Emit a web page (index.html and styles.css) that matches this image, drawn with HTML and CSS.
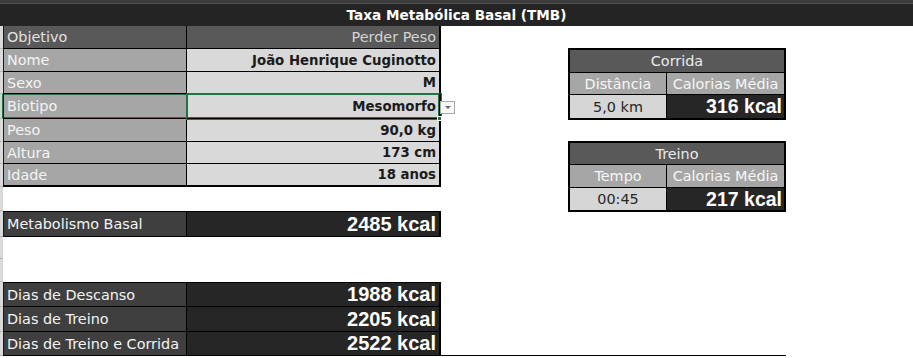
FILE: index.html
```html
<!DOCTYPE html>
<html lang="pt-BR">
<head>
<meta charset="utf-8">
<title>Taxa Metabólica Basal (TMB)</title>
<link rel="stylesheet" href="styles.css">
</head>
<body>
<div class="topstrip"></div>
<header class="titlebar">Taxa Metabólica Basal (TMB)</header>
<main class="sheet">
  <section class="profile">
    <div class="row h23 tone-dark"><span class="gut"></span><span class="lbl">Objetivo</span><span class="val light">Perder Peso</span></div>
    <div class="row h23 tone-grey"><span class="gut"></span><span class="lbl">Nome</span><span class="val">João Henrique Cuginotto</span></div>
    <div class="row h22 tone-grey"><span class="gut"></span><span class="lbl">Sexo</span><span class="val">M</span></div>
    <div class="row h25 tone-grey selected"><span class="gut"></span><span class="lbl">Biotipo</span><span class="val active">Mesomorfo<span class="dd"></span><span class="handle"></span></span></div>
    <div class="row h23 tone-grey"><span class="gut"></span><span class="lbl">Peso</span><span class="val">90,0 kg</span></div>
    <div class="row h22 tone-grey"><span class="gut"></span><span class="lbl">Altura</span><span class="val">173 cm</span></div>
    <div class="row h23 tone-grey last"><span class="gut"></span><span class="lbl">Idade</span><span class="val">18 anos</span></div>
    <div class="row h24"><span class="gut"></span></div>
    <div class="row h26 tone-black first"><span class="gut"></span><span class="lbl">Metabolismo Basal</span><span class="val big">2485 kcal</span></div>
    <div class="row h22"><span class="gut"></span></div>
    <div class="row h23"><span class="gut"></span></div>
    <div class="row h25 tone-black first"><span class="gut"></span><span class="lbl">Dias de Descanso</span><span class="val big">1988 kcal</span></div>
    <div class="row h25 tone-black"><span class="gut"></span><span class="lbl">Dias de Treino</span><span class="val big">2205 kcal</span></div>
    <div class="row h24 tone-black"><span class="gut"></span><span class="lbl">Dias de Treino e Corrida</span><span class="val big">2522 kcal</span></div>
  </section>

  <aside class="side">
    <div class="card corrida">
      <div class="c-head">Corrida</div>
      <div class="c-sub">Distância</div>
      <div class="c-sub">Calorias Média</div>
      <div class="c-in">5,0 km</div>
      <div class="c-out">316 kcal</div>
    </div>
    <div class="card treino">
      <div class="c-head">Treino</div>
      <div class="c-sub">Tempo</div>
      <div class="c-sub">Calorias Média</div>
      <div class="c-in">00:45</div>
      <div class="c-out">217 kcal</div>
    </div>
    <div class="rule"></div>
  </aside>
</main>
</body>
</html>
```

FILE: styles.css
```css
* { box-sizing: border-box; }

html, body {
  margin: 0;
  background: #ffffff;
  font-family: "DejaVu Sans", "Noto Sans", sans-serif;
  overflow: hidden;
}

.topstrip {
  height: 4px;
  background: #3c3c3c;
  border-bottom: 1px solid #505050;
}

.titlebar {
  height: 22px;
  background: #242424;
  color: #ffffff;
  font-weight: bold;
  font-size: 13.6px;
  line-height: 22px;
  text-align: center;
}

.sheet {
  display: flex;
  align-items: stretch;
}

/* left block: label / value rows */
.profile {
  width: 441px;
  display: flex;
  flex-direction: column;
}

.row { display: flex; }
.h22 { height: 22px; }
.h23 { height: 23px; }
.h24 { height: 24px; }
.h25 { height: 25px; }
.h26 { height: 26px; }

.gut {
  width: 3px;
  flex: none;
  background: #dadada;
  border-bottom: 1px solid #b4b4b4;
}

.lbl, .val {
  display: flex;
  align-items: center;
  border-bottom: 1px solid #000;
  white-space: nowrap;
}

.lbl {
  width: 184px;
  padding-left: 3px;
  border-left: 1px solid #1a1a1a;
  border-right: 1px solid #000;
  font-size: 14.4px;
  color: #f4f4f4;
}

.val {
  width: 254px;
  justify-content: flex-end;
  padding-right: 3px;
  border-right: 2px solid #000;
  font-size: 13.3px;
  font-weight: bold;
  color: #1b1b1b;
}

.tone-dark .lbl, .tone-dark .val { background: #595959; }
.tone-dark .lbl { color: #e2e2e2; }
.val.light { font-weight: normal; font-size: 14.4px; color: #d4d4d4; }

.tone-grey .lbl { background: #a6a6a6; }
.tone-grey .val { background: #d9d9d9; }

.tone-black .lbl { background: #3f3f3f; }
.tone-black .val { background: #262626; }
.first .lbl, .first .val { border-top: 1px solid #000; }

.last .lbl, .last .val { border-bottom-width: 2px; }

.val.big {
  font-family: "Liberation Sans", Arial, sans-serif;
  font-size: 20px;
  color: #ffffff;
  padding-right: 3px;
}

/* active cell with validation list button */
.selected .gut { background: #cfd9d2; border-right: 1px solid #217346; }
.selected .lbl { box-shadow: inset 0 1px 0 #2f6b4a, inset 0 -1px 0 #2f6b4a; }
.val.active {
  position: relative;
  box-shadow: 0 0 0 1px #217346, inset 0 0 0 1px #217346;
}

.dd {
  position: absolute;
  left: calc(100% + 1px);
  top: 7px;
  width: 15px;
  height: 13px;
  background: #f8f8f8;
  border: 1px solid #a9a9a9;
}
.dd::after {
  content: "";
  position: absolute;
  left: 4px;
  top: 4px;
  border-left: 3px solid transparent;
  border-right: 3px solid transparent;
  border-top: 3px solid #6a6a6a;
}

.handle {
  position: absolute;
  right: -3px;
  bottom: -3px;
  width: 5px;
  height: 5px;
  background: #217346;
  border: 1px solid #ffffff;
}

/* right block: summary cards */
.side {
  width: 345px;
  padding: 22px 0 0 127px;
  display: flex;
  flex-direction: column;
  gap: 21px;
}

.rule {
  margin: auto 0 0 -127px;
  height: 1px;
  background: #000;
}

.card {
  display: grid;
  grid-template-columns: 97px 117px;
  border: 2px solid #000;
  width: 218px;
}
.corrida { grid-template-rows: 23px 22px 23px; }
.treino { grid-template-rows: 22px 23px 22px; }

.card > div {
  display: flex;
  align-items: center;
  justify-content: center;
  white-space: nowrap;
  font-size: 14.4px;
}

.c-head {
  grid-column: 1 / 3;
  background: #595959;
  color: #ececec;
  border-bottom: 1px solid #000;
}

.c-sub {
  background: #a6a6a6;
  color: #f6f6f6;
  border-bottom: 1px solid #000;
}
.c-sub:nth-child(2) { border-right: 1px solid #000; }

.c-in {
  background: #d6d6d6;
  color: #262626;
  border-right: 1px solid #000;
}

.card > .c-out {
  background: #262626;
  color: #ffffff;
  justify-content: flex-end;
  padding-right: 2px;
  font-family: "Liberation Sans", Arial, sans-serif;
  font-weight: bold;
  font-size: 19.5px;
}
```
